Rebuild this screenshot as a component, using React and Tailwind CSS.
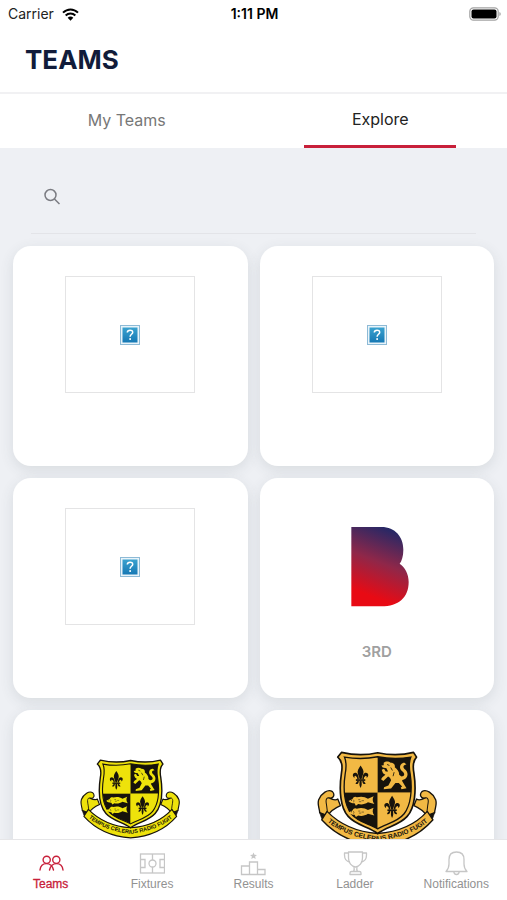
import React from "react";

function WifiIcon() {
  return (
    <svg viewBox="0 0 51 39" className="h-[13px] w-[17px]" aria-hidden="true">
      <g fill="none" stroke="#000" strokeWidth="6">
        <path d="M3 14C16 1 35 1 48 14" />
        <path d="M11 22.500C19 14.500 32 14.500 40 22.500" />
      </g>
      <path d="M17 29C22 24.500 29 24.500 34 29L25.500 38Z" />
    </svg>
  );
}

function BatteryIcon() {
  return (
    <svg viewBox="0 0 32 14" className="h-[14px] w-8" aria-hidden="true">
      <rect x="0.8" y="0.8" width="28.400" height="12.400" rx="3.600" fill="none" stroke="#a3a3a3" strokeWidth="1.200" />
      <rect x="2.500" y="2.500" width="25" height="9" rx="2" fill="#000" />
      <path d="M30.500 5c1.500.6 1.500 3.400 0 4z" fill="#8a8a8a" />
    </svg>
  );
}

function MissingImage() {
  return (
    <div className="flex h-full w-full items-center justify-center border border-[#e4e4e5]">
      <svg viewBox="0 0 20 20" className="h-5 w-5" role="img" aria-label="Missing image">
        <defs>
          <linearGradient id="missing" x1="0" y1="0" x2="0" y2="1">
            <stop offset="0" stopColor="#3aa2cf" />
            <stop offset="1" stopColor="#1678b4" />
          </linearGradient>
        </defs>
        <rect x="0.5" y="0.5" width="19" height="19" fill="#e9f4fa" stroke="#8dbad6" />
        <rect x="2.500" y="2.500" width="15" height="15" fill="url(#missing)" />
        <path d="M7.300 7.500C7.400 4.300 12.800 4.400 12.700 7.400C12.600 9.300 10.100 9.400 10.100 11.700" fill="none" stroke="#fff" strokeWidth="1.500" />
        <rect x="9.300" y="13.200" width="1.700" height="1.700" fill="#fff" />
      </svg>
    </div>
  );
}

function ClubLogo() {
  return (
    <svg viewBox="-16 0 190 240" className="h-20 w-16" role="img" aria-label="Club logo">
      <defs>
        <linearGradient id="club" gradientUnits="userSpaceOnUse" x1="130" y1="10" x2="55" y2="205">
          <stop offset="0" stopColor="#252866" />
          <stop offset="0.5" stopColor="#8f2749" />
          <stop offset="1" stopColor="#e80a14" />
        </linearGradient>
      </defs>
      <path d="M2 0H92C134 0 158 30 158 68C158 88 153 102 147 110C163 120 174 141 174 165C174 211 144 238 92 238H2Z" fill="url(#club)" />
    </svg>
  );
}

function FleurDeLis({ x, y }) {
  return (
    <g transform={`translate(${x} ${y})`} fill="#17130c">
      <path d="M0-34C6-25 11-18 8-9C6-3 4 1 3 7H-3C-4 1-6-3-8-9C-11-18-6-25 0-34Z" />
      <path d="M5 7C6-4 9-12 16-12C25-12 25 0 18 3C19-3 16-5 13-1C10 1 10 4 10 7Z" />
      <path d="M-5 7C-6-4-9-12-16-12C-25-12-25 0-18 3C-19-3-16-5-13-1C-10 1-10 4-10 7Z" />
      <rect x="-14" y="7" width="28" height="5" />
      <path d="M-3 12H3C3 20 5 24 0 33C-5 24-3 20-3 12Z" />
      <path d="M-5 12C-6 20-10 23-15 21C-14 17-11 14-9 12ZM5 12C6 20 10 23 15 21C14 17 11 14 9 12Z" />
    </g>
  );
}

function Fish({ y, fill }) {
  return (
    <g transform={`translate(120 ${y})`}>
      <path d="M0 2L12-4C15-11 20-12 25-9C37-13 49-11 58-5L75-12C71-5 71 3 77 11L58 6C49 12 38 14 29 11L22 16L18 9C10 9 4 7 0 2Z" fill={fill} />
      <path d="M14-2C17 1 17 4 14 6M29-2h6M39 1h7M31 4h7" stroke="#17130c" strokeWidth="1.500" fill="none" />
      <circle cx="9" cy="0" r="1.500" fill="#17130c" />
    </g>
  );
}

function RibbonEnd({ fill }) {
  return (
    <g fill={fill} stroke="#17130c" strokeWidth="4" strokeLinejoin="round">
      <path d="M72 156C59 147 39 161 31 180C26 196 34 206 34 219L58 228C66 214 78 206 96 198L88 178C80 184 70 179 62 175C78 178 79 163 72 156Z" />
      <path d="M62 175C57 172 53 178 53 184C53 196 59 208 56 226" fill="none" strokeWidth="3" />
      <path d="M34 219L58 228L50 240L40 236Z" fill="#17130c" strokeWidth="2" />
    </g>
  );
}

const outerShield =
  "M99 39Q155 52 207 40Q262 52 314 39L323 53Q309 67 315 100C323 153 318 204 295 230C271 257 235 260 207 281C179 260 143 257 119 230C96 204 91 153 99 100Q105 67 88 53Z";
const innerShield =
  "M108 53Q158 62 207 52Q258 62 306 53Q298 72 304 104C311 150 306 196 286 222C266 247 232 252 207 267C182 252 148 247 128 222C108 196 103 150 110 104Q116 72 108 53Z";

function Crest({ fill, id, className }) {
  const ink = "#17130c";
  return (
    <svg viewBox="26 36 358 284" className={className} role="img" aria-label="School crest">
      <defs>
        <clipPath id={`${id}-field`}>
          <path d={innerShield} />
        </clipPath>
        <path id={`${id}-motto`} d="M50 239Q103 290 207 303Q311 290 364 239" />
      </defs>
      <RibbonEnd fill={fill} />
      <g transform="translate(411 0) scale(-1 1)">
        <RibbonEnd fill={fill} />
      </g>
      <path d="M56 215C96 256 151 277 207 281C263 277 318 256 355 215L372 240C326 293 269 313 207 317C145 313 88 293 40 240Z" fill={fill} stroke={ink} strokeWidth="4" strokeLinejoin="round" />
      <path d={outerShield} fill={fill} stroke={ink} strokeWidth="5" strokeLinejoin="round" />
      <g clipPath={`url(#${id}-field)`}>
        <rect x="90" y="40" width="117" height="119" fill={fill} />
        <rect x="207" y="40" width="120" height="119" fill={ink} />
        <rect x="90" y="159" width="117" height="125" fill={ink} />
        <rect x="207" y="159" width="120" height="125" fill={fill} />
      </g>
      <path d={innerShield} fill="none" stroke={ink} strokeWidth="4" />
      <FleurDeLis x={156} y={112} />
      <FleurDeLis x={250} y={202} />
      <Fish y={182} fill={fill} />
      <Fish y={216} fill={fill} />
      <g fill={fill}>
        <path d="M225 70C231 64 240 65 246 70C255 70 260 76 258 83C266 89 272 97 271 106C278 110 282 116 280 124L288 138L293 146L278 149L276 144L280 141L270 130L260 130L247 147L225 149L226 143L239 138L247 122C245 116 242 113 238 111L224 124L217 119L221 113L230 106L223 101L219 91L226 88L231 96L238 96L233 86L222 84L218 78L225 77Z" />
        <path d="M273 110C288 113 290 102 280 95C269 87 273 70 287 70L293 75C282 76 281 84 290 91C302 102 296 122 277 122Z" />
      </g>
      <path d="M235 75l7 3M246 84l5 9M256 98l-3 12" stroke={ink} strokeWidth="2.500" />
      <text fill={ink} className="font-['Liberation_Sans',sans-serif] text-[20px] font-bold">
        <textPath href={`#${id}-motto`} startOffset="50%" textAnchor="middle">TEMPUS CELERIUS RADIO FUGIT</textPath>
      </text>
    </svg>
  );
}

const teams = [
  { id: "a", art: <MissingImage />, name: "" },
  { id: "b", art: <MissingImage />, name: "" },
  { id: "c", art: <MissingImage />, name: "" },
  { id: "d", art: <ClubLogo />, name: "3RD" },
  { id: "e", art: <Crest id="yellow" fill="#eee20b" className="h-20 w-[100px]" />, name: "" },
  { id: "f", art: <Crest id="gold" fill="#f2b944" className="h-24 w-[120px]" />, name: "" },
];

function TeamCard({ team }) {
  return (
    <button type="button" aria-label={team.name || "Team"} className="flex h-[220px] flex-col items-center justify-start rounded-[18px] bg-white pt-[30px] shadow-[0_4px_14px_rgba(60,70,80,0.12)]">
      <span className="flex h-[117px] w-[130px] items-center justify-center">{team.art}</span>
      <span className="mt-[17px] text-[15px] leading-5 font-semibold text-[#a0a0a0]">{team.name}</span>
    </button>
  );
}

function Icon({ children }) {
  return (
    <svg viewBox="0 0 26 26" className="h-[26px] w-[26px]" fill="none" stroke="currentColor" aria-hidden="true">
      {children}
    </svg>
  );
}

const navItems = [
  {
    label: "Teams",
    icon: (
      <g strokeWidth="1.400" strokeLinecap="round">
        <circle cx="8.700" cy="9.800" r="3.600" />
        <circle cx="18.300" cy="9.800" r="3.600" />
        <path d="M2 20C3 11.500 13.500 11.500 15.500 20M11.500 20C13.500 11.500 24 11.500 25 20" />
      </g>
    ),
  },
  {
    label: "Fixtures",
    icon: (
      <g strokeWidth="1.300">
        <rect x="1.500" y="4" width="24" height="19" />
        <path d="M13.500 4V10M13.500 17V23M1.500 9.500H6V17.500H1.500M25.500 9.500H21V17.500H25.500" />
        <circle cx="13.500" cy="13.500" r="3.500" />
      </g>
    ),
  },
  {
    label: "Results",
    icon: (
      <g strokeWidth="1.300">
        <path d="M1.500 24.500V16H9.500V24.500ZM9.500 24.500V12H17.500V24.500ZM17.500 24.500V19.500H25V24.500Z" />
        <path d="M13.500 2.500L14.500 4.800L17 5L15.100 6.600L15.700 9L13.500 7.700L11.300 9L11.900 6.600L10 5L12.500 4.800Z" fill="currentColor" stroke="none" />
      </g>
    ),
  },
  {
    label: "Ladder",
    icon: (
      <g strokeWidth="1.300" strokeLinejoin="round">
        <path d="M6.500 2H20.500V8C20.500 13 17.500 16.500 13.500 17C9.500 16.500 6.500 13 6.500 8Z" />
        <path d="M6.500 3H2.500V5C2.500 9 4.500 11.500 8 12M20.500 3H24.500V5C24.500 9 22.500 11.500 19 12" />
        <path d="M12 17C12.500 19 12.500 20 11.500 21.500M15 17C14.500 19 14.500 20 15.500 21.500M8 24.500V23Q8 21.500 9.500 21.500H17.500Q19 21.500 19 23V24.500Z" />
      </g>
    ),
  },
  {
    label: "Notifications",
    icon: (
      <g strokeWidth="1.300" strokeLinejoin="round">
        <path d="M3 21.500C5.500 19 6 17.500 6 14V9.500C6 4.500 9 2 13.500 2C18 2 21 4.500 21 9.500V14C21 17.500 21.500 19 24 21.500Z" />
        <path d="M10.800 21.500C11 25.500 16 25.500 16.200 21.500" />
      </g>
    ),
  },
];

export default function App() {
  return (
    <div className="flex h-screen flex-col overflow-hidden bg-[#eef0f4] font-['Inter',sans-serif]">
      <header className="shrink-0 bg-white">
        <div className="grid h-7 grid-cols-3 items-center pr-[6px] pl-2 text-[14px] leading-5 text-black">
          <div className="flex items-center gap-2 text-[#222]">
            <span>Carrier</span>
            <WifiIcon />
          </div>
          <time className="text-center font-semibold">1:11 PM</time>
          <div className="flex justify-end">
            <BatteryIcon />
          </div>
        </div>
        <h1 className="h-[66px] border-b-2 border-[#f1f1f3] px-[25px] pt-4 text-[26px] leading-8 font-bold text-[#111c3a]">TEAMS</h1>
        <div role="tablist" className="flex h-[54px]">
          <button type="button" role="tab" aria-selected="false" className="flex flex-1 justify-center text-[#777]">
            <span className="h-full w-[152px] border-b-[3px] border-transparent pt-[14px] text-[16px] leading-6">My Teams</span>
          </button>
          <button type="button" role="tab" aria-selected="true" className="flex flex-1 justify-center text-[#222]">
            <span className="h-full w-[152px] border-b-[3px] border-[#c8203a] pt-[13px] text-[16px] leading-6">Explore</span>
          </button>
        </div>
      </header>

      <main className="min-h-0 flex-1 overflow-y-auto [scrollbar-width:none]">
        <div role="search" className="mx-[31px] mt-3 mb-3 flex h-[74px] items-center gap-3 border-b border-[#e3e4e8] px-3">
          <svg viewBox="0 0 18 18" className="h-[18px] w-[18px]" fill="none" stroke="#7b7c82" strokeWidth="1.500" aria-hidden="true">
            <circle cx="7.500" cy="7" r="5.500" />
            <path d="M11.500 11L16.500 16" />
          </svg>
          <input type="search" aria-label="Search teams" className="h-10 min-w-0 flex-1 bg-transparent text-[16px] text-[#333] outline-none" />
        </div>
        <div className="grid grid-cols-2 gap-3 px-[13px] pb-3">
          {teams.map((team) => (
            <TeamCard key={team.id} team={team} />
          ))}
        </div>
      </main>

      <nav className="z-10 grid h-[61px] shrink-0 grid-cols-5 border-t border-[#e6e6e8] bg-white font-['Liberation_Sans',Arial,sans-serif]">
        {navItems.map((item, i) => (
          <a
            key={item.label}
            href="#"
            aria-current={i === 0 ? "page" : undefined}
            className={`flex flex-col items-center pt-[10px] text-[12px] leading-4 ${i === 0 ? "text-[#c8203a]" : "text-[#929292]"}`}
          >
            <span className={i === 0 ? "" : "text-[#c6c6c6]"}>
              <Icon>{item.icon}</Icon>
            </span>
            <span className={i === 0 ? "[-webkit-text-stroke:0.3px_currentColor]" : ""}>{item.label}</span>
          </a>
        ))}
      </nav>
    </div>
  );
}
